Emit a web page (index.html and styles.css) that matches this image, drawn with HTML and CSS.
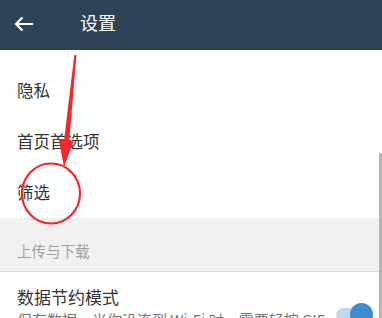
FILE: index.html
```html
<!DOCTYPE html>
<html lang="zh">
<head>
  <meta charset="UTF-8">
  <title>设置</title>
  <link rel="stylesheet" href="styles.css">
</head>
<body>
  <div class="topbar">
    <svg class="back" width="20" height="16" viewBox="0 0 20 16">
      <path d="M19 8H2.5M8.5 1.5L2 8l6.5 6.5" fill="none" stroke="#fff" stroke-width="2.2"/>
    </svg>
    <span class="title">设置</span>
  </div>

  <div class="list">
    <div class="item">隐私</div>
    <div class="item">首页首选项</div>
    <div class="item">筛选</div>
  </div>

  <div class="section">上传与下载</div>

  <div class="row">
    <div class="row-text">
      <div class="row-title">数据节约模式</div>
      <div class="row-sub">保存数据，当你没连到 Wi-Fi 时，需要轻按 GIF 才会播放</div>
    </div>
    <div class="toggle"><span class="knob"></span></div>
  </div>

  <div class="scrollbar"></div>

  <svg class="mark" width="382" height="318" viewBox="0 0 382 318">
    <path d="M74.3 55 L76.5 55.3 L69 143 L63.8 142.5 Z" fill="#f2282b"/>
    <path d="M58.5 138.5 L73.5 141.5 L64 167 Z" fill="#f2282b"/>
    <ellipse cx="51" cy="193.5" rx="29" ry="30" fill="none" stroke="#f2282b" stroke-width="2.2"/>
  </svg>
</body>
</html>
```

FILE: styles.css
```css
body, div {
  margin: 0;
  padding: 0;
}

body {
  width: 382px;
  height: 318px;
  overflow: hidden;
  position: relative;
  background: #fff;
  font-family: "Noto Sans CJK SC", "Liberation Sans", sans-serif;
  color: #333;
}

.topbar {
  height: 50px;
  background: #2e4358;
  display: flex;
  align-items: center;
  padding-left: 14px;
  color: #fff;
}

.back {
  margin-top: -3px;
}

.title {
  font-size: 18px;
  margin-left: 46px;
  margin-top: -6px;
}

.list {
  padding-top: 15px;
}

.item {
  height: 51px;
  line-height: 51px;
  padding-left: 17px;
  font-size: 16.5px;
}

.section {
  height: 30px;
  padding-top: 23px;
  background: #f0f0f0;
  border-bottom: 1px solid #dcdcdc;
  padding-left: 17px;
  font-size: 14.5px;
  line-height: 20px;
  color: #a0a0a0;
}

.row {
  display: flex;
  padding: 13px 0 0 17px;
}

.row-text {
  flex: 1;
  overflow: hidden;
  white-space: nowrap;
}

.row-title {
  font-size: 17px;
  line-height: 24px;
}

.row-sub {
  font-size: 15px;
  line-height: 22px;
  color: #777;
}

.toggle {
  position: relative;
  width: 34px;
  height: 14px;
  border-radius: 7px;
  background: #bcd9ee;
  margin: 23px 12px 0 8px;
  flex-shrink: 0;
}

.knob {
  position: absolute;
  right: -3px;
  top: -5px;
  width: 23px;
  height: 23px;
  border-radius: 50%;
  background: #3a8ccc;
}

.scrollbar {
  position: absolute;
  right: 0;
  top: 153px;
  width: 3px;
  height: 165px;
  background: #b4b4b4;
}

.mark {
  position: absolute;
  left: 0;
  top: 0;
}
```
